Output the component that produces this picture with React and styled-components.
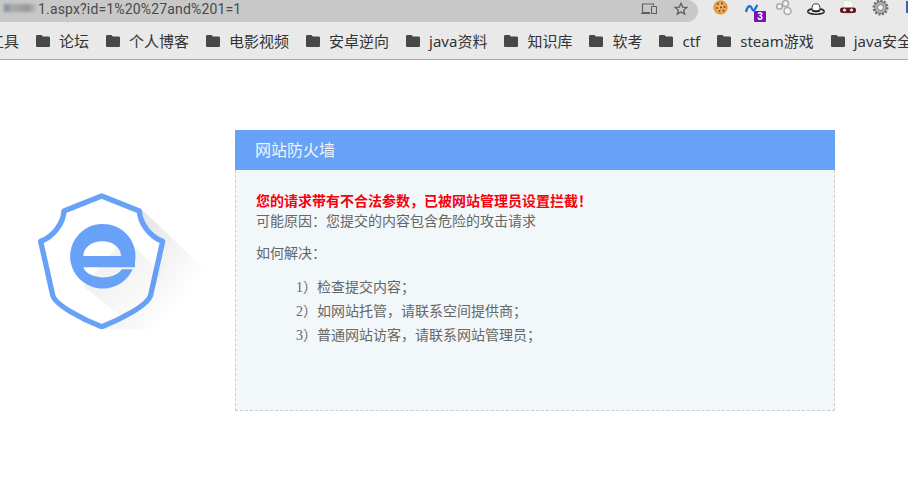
import React from "react";
import styled, { createGlobalStyle } from "styled-components";

const Global = createGlobalStyle`
  html, body { margin: 0; padding: 0; background: #fff; }
  body { width: 908px; height: 489px; overflow: hidden; }
`;

const Toolbar = styled.div`
  height: 22px;
  display: flex;
  background: #e9e9e9;
`;
const Omnibox = styled.div`
  position: relative;
  width: 698px;
  flex: none;
  height: 22px;
  display: flex;
  align-items: center;
  justify-content: space-between;
  background: #c8c8c8;
  border-radius: 0 14px 14px 0;
  box-sizing: border-box;
  padding: 0 10px 4px 38px;
`;
const Url = styled.span`
  font: 14px "Roboto", "Liberation Sans", sans-serif;
  letter-spacing: 0.16px;
  color: #4a4a4a;
`;
const Blurred = styled.span`
  position: absolute;
  left: 4px;
  top: 4px;
  width: 32px;
  height: 8px;
  background: linear-gradient(90deg, #76869c 0%, #a9a9a9 25%, #989898 75%, #bcbcbc 100%);
  filter: blur(1.5px);
`;
const OmniIcons = styled.div`
  display: flex;
  align-items: center;
  gap: 17px;
`;
const Actions = styled.div`
  display: flex;
  flex: none;
  padding-left: 6px;
`;
const ActionSlot = styled.div`
  position: relative;
  width: 32px;
  height: 22px;
  display: flex;
  justify-content: center;
  box-sizing: border-box;
`;
const Badge = styled.span`
  position: absolute;
  left: 18px;
  top: 11px;
  width: 12px;
  height: 11px;
  background: #7a0fb5;
  border-radius: 1px;
  color: #fff;
  font: bold 10px/11px "Liberation Sans", sans-serif;
  text-align: center;
`;
const Bookmarks = styled.div`
  height: 38px;
  box-sizing: border-box;
  border-bottom: 1px solid #a8a8a8;
  background: #e9e9e9;
  display: flex;
  align-items: center;
  overflow: hidden;
  white-space: nowrap;
`;
const BookmarkList = styled.div`
  display: flex;
  align-items: center;
  gap: 17px;
  margin-left: -11px;
`;
const Bookmark = styled.div`
  display: flex;
  align-items: center;
  gap: 9px;
  font: 15px/20px "Noto Sans", "Noto Sans CJK SC", sans-serif;
  color: #333;
`;
const Main = styled.main`
  display: flex;
  align-items: flex-start;
  gap: 15px;
  padding: 70px 0 0 20px;
`;
const Logo = styled.svg`
  flex: none;
  display: block;
  width: 200px;
  height: 150px;
  margin-top: 50px;
`;
const Panel = styled.section`
  width: 600px;
  flex: none;
`;
const PanelTitle = styled.h1`
  margin: 0;
  height: 40px;
  background: #68a2f8;
  padding-left: 20px;
  color: #eef4fd;
  font: 400 16px/41px "Liberation Serif", "Noto Sans CJK SC", serif;
`;
const PanelBody = styled.div`
  height: 241px;
  box-sizing: border-box;
  background: #f2f7fa;
  border: 1px dashed #c9d0cc;
  border-top: none;
  padding: 22px 20px 0;
  color: #666;
  font: 14px/20px "Liberation Serif", "Noto Sans CJK SC", serif;
`;
const Alert = styled.div`
  color: #f80010;
  font-weight: 700;
`;
const Paragraph = styled.p`
  margin: 0;
  padding-top: ${p => p.$gap || 0}px;
`;
const Steps = styled.ul`
  list-style: none;
  margin: 12px 0 0;
  padding: 0 0 0 40px;
`;
const Step = styled.li`
  line-height: 24px;
`;
const SliverIcon = styled.svg`
  margin-right: 6px;
`;

const Folder = () => (
  <svg width="14" height="12" viewBox="0 0 14 12" style={{ flex: "none" }}>
    <path d="M1.3 0h4.2l1.4 1.6h5.8c.7 0 1.3.6 1.3 1.3v7.8c0 .7-.6 1.3-1.3 1.3H1.3C.6 12 0 11.4 0 10.7V1.3C0 .6.6 0 1.3 0z" fill="#484848" />
  </svg>
);

const Devices = () => (
  <svg width="16" height="12" viewBox="0 0 16 12" fill="none" stroke="#5f5f5f" strokeWidth="1.1">
    <path d="M9 9.500H1.500V1h11v1.500" />
    <path d="M0 10.500h9" />
    <rect x="10.500" y="3.500" width="5" height="7" rx=".5" />
  </svg>
);

const Star = () => (
  <svg width="14" height="14" viewBox="0 0 15 15" fill="none" stroke="#5c5c5c" strokeWidth="1.400">
    <path d="M7.500 1.400l1.800 4 4.400.4-3.300 2.900 1 4.300-3.900-2.300-3.900 2.300 1-4.300L1.300 5.800l4.400-.4z" />
  </svg>
);

const Cookie = () => (
  <svg width="15" height="15" viewBox="0 0 15 15">
    <circle cx="7.500" cy="7.500" r="7.200" fill="#e39a45" />
    <circle cx="7.500" cy="7.500" r="5" fill="#eeb05c" />
    {[[5, 4], [9, 3.500], [11.500, 7], [4, 8], [8, 7.500], [6.500, 11], [10.500, 10.500]].map(([x, y]) => (
      <circle key={x + "-" + y} cx={x} cy={y} r="1" fill="#7a4a20" />
    ))}
  </svg>
);

const Wave = () => (
  <svg width="14" height="9" viewBox="0 0 14 9" fill="none" stroke="#1f6fd8" strokeWidth="2.400" style={{ marginTop: 4 }}>
    <path d="M1 8C2 3 4 1.500 5.500 2.500S7 6.500 8.500 6.500 10.500 3 12.500 1" />
  </svg>
);

const Rings = () => (
  <svg width="16" height="16" viewBox="0 0 16 16" fill="#f4f4f4" stroke="#a8a8a8" strokeWidth="1.500">
    <circle cx="9.500" cy="3.500" r="3" />
    <circle cx="3.500" cy="6.500" r="2.800" />
    <circle cx="11.500" cy="11" r="3.500" />
  </svg>
);

const Hat = () => (
  <svg width="18" height="12" viewBox="0 0 18 12" style={{ marginTop: 3 }}>
    <ellipse cx="9" cy="8.500" rx="8.300" ry="2.800" fill="none" stroke="#1d1d1d" strokeWidth="1.300" />
    <path d="M5 7.500C5 2.500 6 0 9 1c3-1 4 1.500 4 6.500-2 1.500-6 1.500-8 0z" fill="#fff" stroke="#333" strokeWidth="1" />
    <path d="M5 6.500c2 1 6 1 8 0v2c-2 1-6 1-8 0z" fill="#222" />
  </svg>
);

const Mask = () => (
  <svg width="16" height="16" viewBox="0 0 16 16">
    <path d="M4 .5h6l3 3v5H3z" fill="#f7f7f7" stroke="#d8d8d8" strokeWidth=".6" />
    <rect x="0" y="7.500" width="16" height="5.500" rx="2.500" fill="#5b1a22" />
    <circle cx="4.500" cy="10" r="1.500" fill="#f2f2f2" />
    <circle cx="11.500" cy="10" r="1.500" fill="#f2f2f2" />
    <path d="M4 13h8v2H4z" fill="#e9dede" />
  </svg>
);

const Gear = () => (
  <svg width="17" height="17" viewBox="0 0 17 17" style={{ marginTop: -1 }}>
    <circle cx="8.500" cy="8.500" r="6.500" fill="#8a8a8a" stroke="#707070" strokeWidth="3" strokeDasharray="2 1.300" />
    <circle cx="8.500" cy="8.500" r="5.200" fill="#b8b8b8" />
    <circle cx="8.500" cy="8.500" r="3" fill="#efefef" stroke="#777" strokeWidth="1" />
  </svg>
);

const Sliver = () => (
  <SliverIcon width="6" height="14" viewBox="0 0 6 14">
    <rect x="0" y="1" width="6" height="12" fill="#3f63a8" />
  </SliverIcon>
);

const ShieldLogo = () => (
  <Logo viewBox="0 0 600 450" role="img" aria-label="shield">
    <defs>
      <linearGradient id="cast" gradientUnits="userSpaceOnUse" x1="320" y1="220" x2="490" y2="360">
        <stop offset="0" stopColor="#000" stopOpacity=".09" />
        <stop offset="1" stopColor="#000" stopOpacity="0" />
      </linearGradient>
      <linearGradient id="inner" gradientUnits="userSpaceOnUse" x1="300" y1="270" x2="400" y2="370">
        <stop offset="0" stopColor="#000" stopOpacity=".05" />
        <stop offset="1" stopColor="#000" stopOpacity=".01" />
      </linearGradient>
      <clipPath id="crop"><rect x="0" y="0" width="600" height="448" /></clipPath>
    </defs>
    <g clipPath="url(#crop)">
      <path d="M365 88L620 330L620 450L245 450Z" fill="url(#cast)" />
      <path d="M245 48L358 93C360 130 390 170 428 184L392 345C385 375 300 420 245 440C190 420 105 375 98 345L62 184C100 170 130 130 132 93Z" fill="#fff" stroke="#68a2f8" strokeWidth="16" strokeLinejoin="round" />
      <path d="M315 170L424 283L392 345C380 380 340 400 312 415L190 320Z" fill="url(#inner)" />
      <path fillRule="evenodd" fill="#68a2f8" d="M345 262L345 245A98 97 0 1 0 338 268L305 268A60 38 0 0 1 190 262ZM190 228A56 44 0 0 1 303 228Z" />
    </g>
  </Logo>
);

const bookmarks = ["工具", "论坛", "个人博客", "电影视频", "安卓逆向", "java资料", "知识库", "软考", "ctf", "steam游戏", "java安全"];

export default function App() {
  return (
    <>
      <Global />
      <Toolbar>
        <Omnibox>
          <Blurred />
          <Url>1.aspx?id=1%20%27and%201=1</Url>
          <OmniIcons>
            <Devices />
            <Star />
          </OmniIcons>
        </Omnibox>
        <Actions>
          <ActionSlot><Cookie /></ActionSlot>
          <ActionSlot><Wave /><Badge>3</Badge></ActionSlot>
          <ActionSlot><Rings /></ActionSlot>
          <ActionSlot><Hat /></ActionSlot>
          <ActionSlot><Mask /></ActionSlot>
          <ActionSlot><Gear /></ActionSlot>
          <ActionSlot><Sliver /></ActionSlot>
        </Actions>
      </Toolbar>
      <Bookmarks>
        <BookmarkList>
          {bookmarks.map((b, i) => (
            <Bookmark key={b}>
              {i > 0 && <Folder />}
              {b}
            </Bookmark>
          ))}
        </BookmarkList>
      </Bookmarks>
      <Main>
        <ShieldLogo />
        <Panel>
          <PanelTitle>网站防火墙</PanelTitle>
          <PanelBody>
            <Alert>您的请求带有不合法参数，已被网站管理员设置拦截！</Alert>
            <Paragraph>可能原因：您提交的内容包含危险的攻击请求</Paragraph>
            <Paragraph $gap={12}>如何解决：</Paragraph>
            <Steps>
              <Step>1）检查提交内容；</Step>
              <Step>2）如网站托管，请联系空间提供商；</Step>
              <Step>3）普通网站访客，请联系网站管理员；</Step>
            </Steps>
          </PanelBody>
        </Panel>
      </Main>
    </>
  );
}
